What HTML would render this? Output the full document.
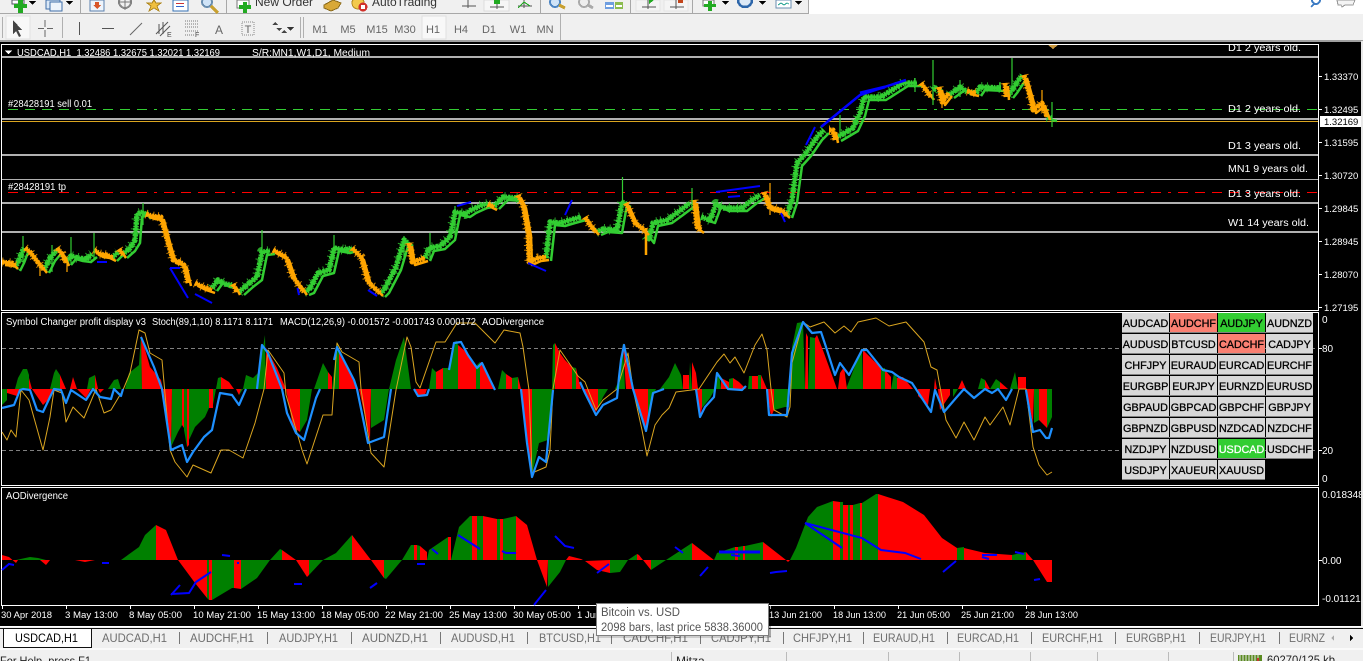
<!DOCTYPE html>
<html><head><meta charset="utf-8"><style>
html,body{margin:0;padding:0;background:#000;width:1363px;height:661px;overflow:hidden}
svg{display:block}
text{font-family:"Liberation Sans",sans-serif;font-size:10px;fill:#fff;white-space:pre}
.tb{font-size:11px;fill:#666;text-anchor:middle}
.tab{font-size:12px;fill:#6e6e6e}
.b{font-size:10.8px;fill:#000;text-anchor:middle;stroke:#000;stroke-width:.3}
.st{font-size:12px;fill:#222}
.p{font-size:9.5px}
.t{font-size:9.6px}
</style></head><body>
<svg width="1363" height="661" viewBox="0 0 1363 661" xmlns="http://www.w3.org/2000/svg" shape-rendering="crispEdges">
<defs>
<clipPath id="cm"><rect x="2" y="45" width="1316" height="265"/></clipPath>
<g id="gs" fill="none" stroke-linejoin="round">
<polyline points="15,268 19,260 22,252 24,248"/>
<polyline points="44,270 50,258 55,252 58,250"/>
<polyline points="66,262 71,256 78,258 86,259 92,254"/>
<polyline points="112,258 118,252"/>
<polyline points="122,255 130,248 135,240 137,214 143,212 146,216"/>
<polyline points="212,288 218,280 225,284 232,285"/>
<polyline points="239,292 248,284 257,277 262,252 270,251"/>
<polyline points="304,292 309,290 318,273 329,270 334,248 345,250 352,248"/>
<polyline points="380,294 384,290 396,267 404,240 408,243"/>
<polyline points="425,258 429,248 440,246 450,237 455,212 465,214 471,210 482,205 488,204"/>
<polyline points="494,206 503,197 518,198"/>
<polyline points="546,258 550,222 560,223 570,220 581,217"/>
<polyline points="596,232 603,229 617,230 622,202 626,204"/>
<polyline points="646,236 649,240 653,223 667,220 678,212 690,203"/>
<polyline points="701,217 710,220 716,204 724,208 742,208 752,200 760,195"/>
<polyline points="787,215 792,200 794,185 797,163 806,153 817,137 824,130"/>
<polyline points="836,138 853,128 860,113 864,97 881,97 903,83 917,83"/>
<polyline points="933,90 937,86"/>
<polyline points="949,95 960,87 967,92"/>
<polyline points="976,93 980,87 1001,88"/>
<polyline points="1008,95 1012,90 1022,75"/>
<polyline points="1047,117 1052,118"/>
</g>
<g id="os" fill="none" stroke-linejoin="round">
<polyline points="2,262 12,263 15,266"/>
<polyline points="25,248 30,252 36,260 44,270"/>
<polyline points="57,248 62,254 66,263"/>
<polyline points="94,250 100,254 107,255 113,258"/>
<polyline points="119,249 123,255"/>
<polyline points="146,214 152,216 161,217 165,232 168,243 173,260 180,262 184,265 188,283"/>
<polyline points="195,283 203,287 212,290"/>
<polyline points="233,284 237,292"/>
<polyline points="273,250 286,257 293,277 304,292"/>
<polyline points="352,248 361,257 368,282 380,293"/>
<polyline points="409,243 412,262 425,258"/>
<polyline points="488,204 494,207"/>
<polyline points="518,195 523,205 528,233 529,262 538,258 546,257"/>
<polyline points="585,217 590,225 596,232"/>
<polyline points="626,203 635,223 642,228 646,232"/>
<polyline points="694,200 697,227 701,230"/>
<polyline points="764,192 769,207 781,210 787,215"/>
<polyline points="829,130 833,130 835,140"/>
<polyline points="921,83 931,97"/>
<polyline points="939,87 942,102 949,93"/>
<polyline points="967,91 976,93"/>
<polyline points="1005,83 1006,97"/>
<polyline points="1024,75 1031,100 1033,110 1042,103 1047,117"/>
</g>
</defs>

<rect width="1363" height="661" fill="#000"/>
<!-- toolbars -->
<rect x="0" y="0" width="1363" height="41" fill="#f0f0f0"/>
<rect x="808" y="0" width="555" height="14" fill="#fff"/>
<rect x="0" y="13" width="808" height="1" fill="#a8a8a8"/>
<rect x="808" y="0" width="1" height="14" fill="#a8a8a8"/>
<rect x="0" y="40" width="1363" height="2" fill="#a0a0a0"/>

<!-- row 1 icons -->
<g>
<rect x="12" y="0" width="12" height="4" fill="#fff" stroke="#556"/><path d="M18 0h5v4h4v4h-4v5h-5v-5h-4v-4h4z" fill="#22aa22"/>
<path d="M29 1h7l-3.500 4z" fill="#000"/>
<rect x="46" y="0" width="14" height="9" fill="#dbe8f6" stroke="#3f6ea8"/><rect x="50" y="2" width="12" height="9" fill="#eef4fb" stroke="#3f6ea8"/>
<path d="M66 1h7l-3.500 4z" fill="#000"/>
<rect x="80" y="0" width="1" height="13" fill="#a8a8a8"/>
<rect x="90" y="0" width="14" height="11" fill="#eef4fb" stroke="#5a7fae"/><path d="M95 2h4v3h2l-4 4-4-4h2z" fill="#d8562a"/>
<circle cx="125" cy="2" r="6" fill="none" stroke="#888" stroke-width="2"/><path d="M125 0v10M118 2h14" stroke="#777"/>
<path d="M154 0l2 3h5l-4 3 2 5-5-3-5 3 2-5-4-3h5z" fill="#f0c040" stroke="#b08820"/>
<rect x="173" y="0" width="15" height="11" fill="#fff" stroke="#3672b5"/><rect x="176" y="3" width="8" height="1" fill="#c33"/><rect x="176" y="6" width="8" height="1" fill="#36c"/>
<circle cx="207" cy="2" r="5" fill="#cfe3f7" stroke="#6a8eb0" stroke-width="2"/><path d="M211 6l7 7" stroke="#c8a030" stroke-width="3"/>
<rect x="226" y="0" width="1" height="13" fill="#a8a8a8"/>
<rect x="237" y="0" width="12" height="8" fill="#fff" stroke="#777"/><path d="M243 2h4v3h4v4h-4v4h-4v-4h-4v-4h4z" fill="#22aa22"/>
<text x="255" y="6" style="font-size:12px;fill:#333">New Order</text>
<path d="M324 5l9-5 8 3-3 5-7 3-7-3z" fill="#d8a838" stroke="#8a6a1c"/>
<circle cx="358" cy="3" r="6" fill="#f2c94c" stroke="#b58a20"/><circle cx="363" cy="7" r="4.500" fill="#d0302a"/><rect x="361" y="5" width="4" height="4" fill="#fff"/>
<text x="372" y="6" style="font-size:12px;fill:#333">AutoTrading</text>
<g fill="none" stroke="#555"><path d="M462 6h14M468 0v8"/><path d="M518 6h14M524 0v8"/></g>
<rect x="484" y="0" width="25" height="11" fill="#f6f6f6" stroke="#ddd"/><path d="M490 7h14M497 0v9" stroke="#555"/><rect x="494" y="0" width="6" height="4" fill="#22aa22"/>
<path d="M518 8l6-6 6 4" fill="none" stroke="#22aa22"/>
<rect x="540" y="0" width="1" height="13" fill="#a8a8a8"/>
<circle cx="555" cy="2" r="5" fill="#cfe3f7" stroke="#4d86c4" stroke-width="2"/><path d="M559 5l6 3" stroke="#c8a030" stroke-width="3"/>
<circle cx="584" cy="2" r="5" fill="#eee" stroke="#aaa" stroke-width="2"/><path d="M588 5l5 3" stroke="#aaa" stroke-width="3"/>
<rect x="605" y="2" width="9" height="7" fill="#6f9ee0"/><rect x="615" y="2" width="8" height="7" fill="#8cbc50"/><rect x="606" y="5" width="7" height="2" fill="#fff"/><rect x="616" y="5" width="6" height="2" fill="#fff"/>
<rect x="630" y="0" width="1" height="13" fill="#a8a8a8"/>
<rect x="636" y="0" width="24" height="11" fill="#f4f4f4" stroke="#e4e4e4"/><path d="M642 7h14M648 0v9" stroke="#555"/><path d="M649 0l5 0-5 4z" fill="#22aa22"/>
<rect x="664" y="0" width="24" height="11" fill="#f4f4f4" stroke="#e4e4e4"/><path d="M670 7h14M676 0v9" stroke="#555"/><rect x="678" y="0" width="5" height="3" fill="#c3441a"/>
<rect x="692" y="0" width="1" height="13" fill="#a8a8a8"/>
<rect x="703" y="0" width="11" height="6" fill="#fff" stroke="#777"/><path d="M708 1h4v3h4v3h-4v4h-4v-4h-4v-3h4z" fill="#22aa22"/>
<path d="M722 1h7l-3.500 4z" fill="#000"/>
<circle cx="745" cy="0" r="7" fill="#dde9f6" stroke="#2d66aa" stroke-width="2.500"/>
<path d="M759 1h7l-3.500 4z" fill="#000"/>
<rect x="776" y="0" width="15" height="8" fill="#fff" stroke="#6a8eb0"/><path d="M778 5l3-2 3 2 3-2 2 1" fill="none" stroke="#3a9"/>
<path d="M795 1h7l-3.500 4z" fill="#000"/>
<circle cx="1316" cy="0" r="4" fill="none" stroke="#3d7cc4" stroke-width="2"/><path d="M1314 4l-3 3" stroke="#3d7cc4" stroke-width="2"/>
<path d="M1337 0h18l-2 5h-8l-3 2-1-2h-3z" fill="#f4f4f4" stroke="#999"/>
</g>
<!-- row 2 icons -->
<g>
<rect x="2" y="17" width="1" height="21" fill="#b0b0b0"/>
<rect x="6" y="16" width="24" height="23" fill="#f8f8f8" stroke="#e2e2e2"/>
<path d="M13 20v14l3-3 3 6 2-1-3-6h4z" fill="#444"/>
<path d="M45 20v7M45 30v7M38 28.500h6M47 28.500h6" stroke="#666" fill="none"/>
<rect x="62" y="17" width="1" height="21" fill="#b0b0b0"/>
<rect x="79" y="22" width="1" height="13" fill="#555"/>
<rect x="102" y="28" width="12" height="1" fill="#555"/>
<path d="M130 35l12-12" stroke="#666" shape-rendering="auto"/>
<path d="M156 34l12-12M160 36l10-10M159 24v10M163 22v12" stroke="#555" fill="none" shape-rendering="auto"/><text x="167" y="37" style="font-size:7px;fill:#444">E</text>
<path d="M185 21h13M185 24h13M185 27h13M185 31h13M185 35h10" stroke="#777" stroke-dasharray="1 1"/><text x="195" y="37" style="font-size:7px;fill:#444">F</text>
<text x="219" y="34" style="font-size:12px;fill:#666;text-anchor:middle">A</text>
<rect x="242" y="22" width="12" height="13" fill="none" stroke="#888" stroke-dasharray="1 1"/><text x="248" y="33" style="font-size:11px;fill:#666;text-anchor:middle">T</text>
<path d="M272 25l3-3 3 3zM276 28l3 3 3-3zM281 33l3-3 3 3z" fill="#444"/>
<path d="M287 27h7l-3.500 4z" fill="#333"/>
<rect x="300" y="17" width="1" height="21" fill="#b0b0b0"/><rect x="303" y="17" width="1" height="21" fill="#b0b0b0"/>
<rect x="422" y="16" width="24" height="23" fill="#f8f8f8" stroke="#e0e0e0"/>
<text class="tb" x="320" y="33">M1</text><text class="tb" x="348" y="33">M5</text><text class="tb" x="377" y="33">M15</text><text class="tb" x="405" y="33">M30</text><text class="tb" x="433" y="33">H1</text><text class="tb" x="461" y="33">H4</text><text class="tb" x="489" y="33">D1</text><text class="tb" x="518" y="33">W1</text><text class="tb" x="545" y="33">MN</text>
<rect x="560" y="14" width="1" height="26" fill="#b0b0b0"/>
</g>

<!-- frames -->
<g fill="none" stroke="#fff">
<path d="M1.500 44.500H1318.500V310.500H1.500Z"/>
<path d="M1.500 312.500H1318.500V485.500H1.500Z"/>
<path d="M1.500 487.500H1318.500V605.500H1.500Z"/>
</g>
<g fill="#fff"><rect x="1319" y="76" width="3" height="1"/><rect x="1319" y="109" width="3" height="1"/><rect x="1319" y="142" width="3" height="1"/><rect x="1319" y="175" width="3" height="1"/><rect x="1319" y="208" width="3" height="1"/><rect x="1319" y="241" width="3" height="1"/><rect x="1319" y="274" width="3" height="1"/><rect x="1319" y="307" width="3" height="1"/><rect x="1319" y="348" width="3" height="1"/><rect x="1319" y="450" width="3" height="1"/><rect x="1319" y="560" width="3" height="1"/></g>

<!-- Main chart -->
<g clip-path="url(#cm)">
<g fill="#b0b0b0">
<rect x="2" y="56" width="1317" height="2"/><rect x="2" y="118" width="1317" height="2"/><rect x="2" y="154" width="1317" height="2"/><rect x="2" y="179" width="1317" height="1"/><rect x="2" y="202" width="1317" height="2"/><rect x="2" y="231" width="1317" height="2"/>
</g>
<rect x="2" y="121" width="1316" height="1" fill="#daa520"/>
<path d="M8 109.500H1318" stroke="#32cd32" stroke-dasharray="10 7 10 7 10 7 10 7 3 7"/>
<path d="M8 192.500H1318" stroke="#ff0000" stroke-dasharray="10 7 10 7 10 7 10 7 3 7"/>
<g style="shape-rendering:auto">
<use href="#gs" stroke="#32cd32" stroke-width="10" stroke-dasharray="1 7.300 1 4.700 1 11.100 1 3.300 1 9" opacity=".8"/>
<use href="#gs" stroke="#32cd32" stroke-width="5.500" stroke-dasharray="2.500 .8 1.500 1.100"/>
<use href="#gs" stroke="#32cd32" stroke-width="3"/>
<use href="#gs" stroke="#32cd32" stroke-width="2.500" transform="translate(5,3)"/>
<use href="#os" stroke="#ffa500" stroke-width="9" stroke-dasharray="1 6.300 1 3.700 1 9.100" opacity=".8"/>
<use href="#os" stroke="#ffa500" stroke-width="5" stroke-dasharray="2.500 .8 1.500 1.100"/>
<use href="#os" stroke="#ffa500" stroke-width="3"/>
<use href="#os" stroke="#ffa500" stroke-width="2.500" transform="translate(3,3)"/>
<path fill="none" stroke="#32cd32" stroke-width="1.200" d="M23 236V262M52 245V272M71 237V265M94 233V260M143 203V225M262 230V255M334 235V260M404 236V262M430 233V258M455 206V235M622.500 177V206M692 188V210M840 115V135M933 60V105M1012 58V95M1052 102V127M960 80V97M915 78V92M1000 82V92"/>
<path fill="none" stroke="#ffa500" stroke-width="1.200" d="M40 265V276M67 258V272M770 183V215M1033 95V112M1042 90V112M942 98V108"/>
<path fill="none" stroke="#ffa500" stroke-width="2.500" d="M646 228V255"/>
<g fill="none" stroke="#0000ff" stroke-width="2">
<path d="M97 262H107M170 268H180M170 268L188 298M195 294L212 303M297.500 288L299 295M368 290L377 296M457 206L471 202M528 263L546 271"/>
<path d="M565 215L572 200M716 192L760 186M728 197L740 196M781 213L785 222M806 145L815 127"/>
<path d="M821 127L860 95L906 80" stroke-width="2.500"/>
<path d="M860 93L885 87" stroke-width="3"/>
</g>
</g>
<text x="8" y="107" textLength="84" lengthAdjust="spacingAndGlyphs">#28428191 sell 0.01</text>
<text x="8" y="190" textLength="58" lengthAdjust="spacingAndGlyphs">#28428191 tp</text>
<text x="1228" y="51" textLength="73" lengthAdjust="spacingAndGlyphs">D1 2 years old.</text>
<text x="1228" y="112" textLength="73" lengthAdjust="spacingAndGlyphs">D1 2 years old.</text>
<text x="1228" y="149" textLength="73" lengthAdjust="spacingAndGlyphs">D1 3 years old.</text>
<text x="1228" y="172" textLength="80" lengthAdjust="spacingAndGlyphs">MN1 9 years old.</text>
<text x="1228" y="197" textLength="73" lengthAdjust="spacingAndGlyphs">D1 3 years old.</text>
<text x="1228" y="226" textLength="81" lengthAdjust="spacingAndGlyphs">W1 14 years old.</text>
</g>
<path d="M1048 45h10l-5 4z" fill="#c8963c"/>
<path d="M5 50.500h7l-3.500 4z" fill="#fff"/>
<text x="17" y="56" textLength="203" lengthAdjust="spacingAndGlyphs">USDCAD,H1  1.32486 1.32675 1.32021 1.32169</text>
<text x="252" y="56" textLength="118" lengthAdjust="spacingAndGlyphs">S/R:MN1,W1,D1, Medium</text>

<!-- price scale -->
<g>
<text class="p" x="1324" y="80">1.33370</text><text class="p" x="1324" y="113">1.32495</text>
<rect x="1320" y="116" width="41" height="11" fill="#fff"/><text class="p" x="1324" y="125" style="fill:#000">1.32169</text>
<text class="p" x="1324" y="146">1.31595</text><text class="p" x="1324" y="179">1.30720</text><text class="p" x="1324" y="212">1.29845</text><text class="p" x="1324" y="245">1.28945</text><text class="p" x="1324" y="278">1.28070</text><text class="p" x="1324" y="311">1.27195</text>
<text x="1322" y="323">0</text><text x="1322" y="352">80</text><text x="1322" y="454">20</text><text x="1322" y="482">0</text>
<text x="1322" y="498">0.018348</text><text x="1322" y="564">0.00</text><text x="1322" y="602">-0.011215</text>
</g>

<!-- indicator window 1 -->
<path d="M2 348.500H1318M2 450.500H1318" stroke="#808080" stroke-dasharray="4 3"/>
<g style="shape-rendering:auto">
<g fill="#008000">
<path d="M2 389V405L7 400V389ZM15 389L18 378 23 369 27 369 29 375V389ZM50 389L54 373 56 369 60 375V389ZM87 389L89 378 95 375V389ZM108 389L114 380 118 379 121 389ZM125 389L129 373 139 365 141 335 142 389Z"/>
<path d="M172 389L171 447 178 432 182 425V389ZM184 389V430L187 447V389ZM189 389V440L195 427 205 417 209 408V389ZM213 389V405L216 389ZM216 389L218 378 221 377 221 389ZM239 395L243 389 239 389ZM243 389L246 375 253 378 259 372 265 335 266 389Z"/>
<path d="M300 389V432L307 420 312 389ZM314 389L323 363 328 372V389ZM332 389L337 342 339 350V389ZM371 389V428L384 420 389 389ZM389 389L396 360 404 337 411 389ZM429 389L432 368 436 372V389ZM443 389L443 368 450 368 456 340 458 345V389ZM476 389V366L480 362V389ZM498 389L502 370 506 374V389ZM512 389V378L518 377V389ZM532 389V475L539 443 548 440 552 389ZM552 389L553 345 555 343V389Z"/>
<path d="M572 389L572 367 576 368 576 389ZM598 389V408L603 397 608 389ZM615 389L619 380 623 343 625 389ZM648 389V425L653 397 656 389ZM660 389L669 377 675 363 681 375 683 389ZM689 389L690 362 692 389ZM702 389V408L710 398 715 389ZM715 389L719 373 721 389ZM729 389V379L733 378V389ZM748 389L749 376 752 376V389ZM758 389V375H761V389ZM774 389V410L785 407 789 407 790 389ZM790 389L792 347 797 323 803 322 805 389ZM808 389L810 337 815 338 815 389ZM846 389L862 348 863 389ZM881 389V368H885V389ZM891 389L894 373 897 378V389ZM953 389V397L958 389ZM978 389L981 378 985 380V389ZM990 389L996 379 1000 382V389ZM1010 389L1015 372 1018 389ZM1034 389V423L1039 420V389ZM1047 389V428L1052 417V389Z"/>
</g>
<g fill="#ff0000">
<path d="M7 389V393L17 396 20 389ZM29 389V378L32 389ZM32 389L43 405 48 400 54 389ZM60 389V375L66 389ZM70 389L73 377 77 389ZM77 389L86 398 91 389ZM95 389V375L98 389ZM98 389L100 393 104 389ZM142 389L141 335 150 367 161 380 163 389Z"/>
<path d="M163 389L171 447 172 389ZM182 389V425L184 428V389ZM187 389V447L189 445V389ZM209 389V408L213 408V389ZM221 389V377L229 382 234 389ZM236 389L239 395 241 389ZM266 389V348L277 368 286 389ZM286 389L293 427 300 432V389ZM328 389V372L332 377V389ZM339 389V350L357 389ZM359 389L370 440 371 389ZM414 389L416 395 425 395 427 389ZM436 389V372L443 368V389ZM458 389V345L464 350 476 366V389ZM480 389V362L495 389ZM506 389V374L512 378V389ZM518 389V377L521 389ZM521 389L532 475V389ZM555 389V343L560 353 565 360 572 367V389ZM576 389V368L581 389Z"/>
<path d="M583 389L596 412 598 408V389ZM626 389L623 343 633 389ZM633 389L646 432 648 425V389ZM683 389V375H689V389ZM692 389V362L696 373 698 389ZM695 389L700 417 702 408V389ZM721 389V378L729 382V389ZM733 389V378L739 382 746 389ZM752 389V376H758V389ZM761 389V375L767 389ZM767 389L771 417 774 410V389ZM805 389L806 333 808 337V389ZM815 389V338L817 335 824 353 837 389ZM838 389L840 373 844 367 847 389ZM863 389V350L881 368V389ZM885 389V370L891 377V389ZM897 389V378L903 377 913 389ZM918 389V396L928 405 930 389ZM934 389L935 378 937 389ZM938 389L940 410 950 395V389ZM958 389L962 380 966 389ZM985 389V380L990 389ZM1000 389V382L1008 389ZM1018 389V377H1026V389ZM1026 389L1033 423 1034 389ZM1039 389V420L1047 428V389Z"/>
</g>
<polyline fill="none" stroke="#daa520" stroke-width="1" stroke-linejoin="round" points="2,432 7,440 11,430 16,437 21,390 29,400 43,450 50,417 54,390 62,393 66,422 73,407 84,418 96,389 104,413 111,410 123,390 130,373 139,330 145,333 150,353 162,360 170,450 175,462 187,477 193,465 211,473 221,450 229,450 243,458 255,423 264,389 268,350 284,373 286,395 302,450 307,464 323,415 332,415 337,343 342,352 359,362 361,389 371,453 384,467 396,390 407,337 411,347 416,382 420,388 436,342 445,342 457,323 475,323 495,343 504,330 520,333 523,347 529,390 532,473 546,467 550,450 553,389 560,350 578,376 585,382 596,410 603,400 617,389 628,353 633,389 642,430 647,456 655,425 662,415 669,408 676,392 699,389 717,362 724,354 730,363 735,357 744,373 755,345 762,334 767,350 771,389 774,410 787,417 790,407 792,363 803,322 810,327 824,322 835,333 844,326 851,332 858,322 876,318 889,326 906,322 924,342 931,367 937,370 946,420 956,438 964,422 974,440 985,417 990,425 1003,407 1010,425 1019,389 1026,389 1033,447 1039,465 1047,475 1052,472"/>
<g fill="none" stroke="#1e90ff" stroke-width="2.200" stroke-linejoin="round">
<polyline points="2,408 14,405 20,390 23,389 30,390 37,410 43,412 50,397 54,389 61,390 66,403 71,390 86,400 93,389 100,397 111,399 114,389 121,396 123,389"/>
<polyline points="141,337 154,367 162,389 171,450 182,445 187,462 193,452 204,437 212,430 220,393 232,395 239,405 246,389"/>
<polyline points="257,389 262,345 268,353 282,389 287,413 296,433 304,440 316,398 320,389"/>
<polyline points="334,360 337,347 354,380 357,389 368,443 384,437 391,389"/>
<polyline points="414,389 418,396 427,395 429,389"/>
<polyline points="449,370 454,343 461,342 468,355 477,368 482,363 495,390"/>
<polyline points="521,389 527,443 532,477 539,457 546,462 553,390"/>
<polyline points="580,382 585,393 596,415 603,405 617,398 619,377 621,360 624,345 633,389 646,431 653,393 664,389"/>
<polyline points="696,389 700,417 705,407 714,397 717,373 728,389 742,390 746,386"/>
<polyline points="767,389 769,415 787,415 792,353 803,322 812,333 821,332 826,347 835,375 840,363 849,375 862,350 867,350 883,370 892,372 899,377 912,383 931,412 935,390 944,412 956,398 964,389 974,398 985,389 992,393 998,389 1006,400 1012,389"/>
<polyline points="1026,390 1033,432 1040,430 1046,438 1049,438 1052,428"/>
</g>
</g>
<text x="6" y="325" textLength="140" lengthAdjust="spacingAndGlyphs">Symbol Changer profit display v3</text>
<text x="152" y="325" textLength="121" lengthAdjust="spacingAndGlyphs">Stoch(89,1,10) 8.1171 8.1171</text>
<text x="280" y="325" textLength="196" lengthAdjust="spacingAndGlyphs">MACD(12,26,9) -0.001572 -0.001743 0.000172</text>
<text x="482" y="325" textLength="62" lengthAdjust="spacingAndGlyphs">AODivergence</text>

<!-- AO window -->
<g style="shape-rendering:auto">
<g fill="#ff0000">
<path d="M2 560V555L9 557 16 563 18 560ZM40 560L46 565 50 560ZM75 560L85 562 95 560ZM156 560V525L166 530 178 560ZM178 560L195 583 207 598V560ZM209 560V600L212 600V560ZM234 560V588L241 589V560ZM282 560V550L296 560ZM296 560L307 577 309 575V560ZM352 560V535L371 560ZM371 560L384 578V560ZM414 560V545H417V560ZM420 560V546L427 552V560ZM448 560V537H451V560ZM472 560V516H477V560ZM483 560V516L497 519V560ZM500 560V519H503V560ZM516 560V516L527 525 537 560ZM537 560L547 587 548 560Z"/>
<path d="M566 560L569 556 581 559 583 560ZM585 561L597 570 610 573V560ZM637 554L639 555 643 560H637ZM643 560L651 570V560ZM692 560V543L714 560ZM735 560V547H738V560ZM743 560V546H745V560ZM763 560V542L786 560ZM786 560L788 562 790 560ZM833 560V501L840 502V560ZM843 560V505H848V560ZM850 560V505H853V560ZM860 560V503H862V560ZM878 560V494L903 502 924 515 942 538 957 548V560ZM964 560V548L985 553 1012 555V560ZM1026 560V552L1033 560ZM1033 560L1047 582 1052 582V560Z"/>
</g>
<g fill="#008000">
<path d="M16 560L30 557 38 558 46 560ZM46 565L52 560ZM121 560L139 547 145 535 156 525V560ZM207 560V598L209 600V560ZM212 560V600L232 588 234 588V560ZM241 560V589L257 578 270 560ZM270 560L280 549 282 550V560ZM309 575V560L323 560ZM323 560L336 553 352 535V560ZM384 578L386 579 402 560H384ZM402 560L411 545 414 545V560ZM417 560V545L420 546V560ZM427 560L429 550 448 537V560ZM451 560L459 527 470 516 472 516V560ZM477 560V516H483V560ZM497 560V519H500V560ZM503 560V519L516 516V560ZM548 560V587L560 572 566 560Z"/>
<path d="M610 573L620 572 628 560H610ZM628 560L637 554V560ZM651 570L666 560H651ZM666 560L692 543V560ZM714 560L717 553 735 547V560ZM738 560V547L743 546V560ZM745 560V546L763 542V560ZM790 560L796 548 808 517 817 507 833 501V560ZM840 560V502H843V560ZM848 560V505H850V560ZM853 560V505L860 503V560ZM862 560V503L876 494 878 494V560ZM957 560V548L964 547V560ZM1012 560V555L1026 552V560Z"/>
</g>
<g fill="none" stroke="#0000ff" stroke-width="2">
<path d="M2 570L9 564 14 565M102 563H109M222 555L230 556M237 563H239M171 595L180 585M171 594L189 593 196 582 211 572M294 584H302M370 588L377 583M417 564H425M432 549L438 554M458 535L480 549M502 551L506 553H516M534 605L546 590M555 536L565 546 574 548M675 547L683 553M597 573L609 564M700 576L708 567M770 573L776 572 787 571M731 555L740 556M805 523L842 548M805 523L862 538 881 550 905 553 921 559M943 572L956 561M982 555H997M982 557L989 559M1015 552L1024 554M1034 580L1040 579"/>
<path d="M719 552H760" stroke-width="3"/>
</g>
</g>
<text x="6" y="499" textLength="62" lengthAdjust="spacingAndGlyphs">AODivergence</text>

<!-- symbol buttons -->
<g>
<g fill="#d8d8d8">
<rect x="1122" y="313" width="47" height="20"/><rect x="1266" y="313" width="47" height="20"/>
<rect x="1122" y="334" width="47" height="20"/><rect x="1170" y="334" width="47" height="20"/><rect x="1266" y="334" width="47" height="20"/>
<rect x="1122" y="355" width="47" height="20"/><rect x="1170" y="355" width="47" height="20"/><rect x="1218" y="355" width="47" height="20"/><rect x="1266" y="355" width="47" height="20"/>
<rect x="1122" y="376" width="47" height="20"/><rect x="1170" y="376" width="47" height="20"/><rect x="1218" y="376" width="47" height="20"/><rect x="1266" y="376" width="47" height="20"/>
<rect x="1122" y="397" width="47" height="20"/><rect x="1170" y="397" width="47" height="20"/><rect x="1218" y="397" width="47" height="20"/><rect x="1266" y="397" width="47" height="20"/>
<rect x="1122" y="418" width="47" height="20"/><rect x="1170" y="418" width="47" height="20"/><rect x="1218" y="418" width="47" height="20"/><rect x="1266" y="418" width="47" height="20"/>
<rect x="1122" y="439" width="47" height="20"/><rect x="1170" y="439" width="47" height="20"/><rect x="1266" y="439" width="47" height="20"/>
<rect x="1122" y="460" width="47" height="20"/><rect x="1170" y="460" width="47" height="20"/><rect x="1218" y="460" width="47" height="20"/>
</g>
<g fill="#fa8072"><rect x="1170" y="313" width="47" height="20"/><rect x="1218" y="334" width="47" height="20"/></g>
<g fill="#32cd32"><rect x="1218" y="313" width="47" height="20"/><rect x="1218" y="439" width="47" height="20"/></g>
<path d="M1122 332.500h191M1122 353.500h191M1122 374.500h191M1122 395.500h191M1122 416.500h191M1122 437.500h191M1122 458.500h191M1122 479.500h143" stroke="#808080"/>
<g>
<text class="b" x="1145.500" y="327">AUDCAD</text><text class="b" x="1193.500" y="327">AUDCHF</text><text class="b" x="1241.500" y="327">AUDJPY</text><text class="b" x="1289.500" y="327">AUDNZD</text>
<text class="b" x="1145.500" y="348">AUDUSD</text><text class="b" x="1193.500" y="348">BTCUSD</text><text class="b" x="1241.500" y="348">CADCHF</text><text class="b" x="1289.500" y="348">CADJPY</text>
<text class="b" x="1145.500" y="369">CHFJPY</text><text class="b" x="1193.500" y="369">EURAUD</text><text class="b" x="1241.500" y="369">EURCAD</text><text class="b" x="1289.500" y="369">EURCHF</text>
<text class="b" x="1145.500" y="390">EURGBP</text><text class="b" x="1193.500" y="390">EURJPY</text><text class="b" x="1241.500" y="390">EURNZD</text><text class="b" x="1289.500" y="390">EURUSD</text>
<text class="b" x="1145.500" y="411">GBPAUD</text><text class="b" x="1193.500" y="411">GBPCAD</text><text class="b" x="1241.500" y="411">GBPCHF</text><text class="b" x="1289.500" y="411">GBPJPY</text>
<text class="b" x="1145.500" y="432">GBPNZD</text><text class="b" x="1193.500" y="432">GBPUSD</text><text class="b" x="1241.500" y="432">NZDCAD</text><text class="b" x="1289.500" y="432">NZDCHF</text>
<text class="b" x="1145.500" y="453">NZDJPY</text><text class="b" x="1193.500" y="453">NZDUSD</text><text class="b" x="1241.500" y="453" style="fill:#fff;stroke:#fff">USDCAD</text><text class="b" x="1289.500" y="453">USDCHF</text>
<text class="b" x="1145.500" y="474">USDJPY</text><text class="b" x="1193.500" y="474">XAUEUR</text><text class="b" x="1241.500" y="474">XAUUSD</text>
</g>
</g>

<!-- time axis -->
<g fill="#fff"><rect x="2" y="606" width="1" height="3"/><rect x="66" y="606" width="1" height="3"/><rect x="130" y="606" width="1" height="3"/><rect x="194" y="606" width="1" height="3"/><rect x="258" y="606" width="1" height="3"/><rect x="322" y="606" width="1" height="3"/><rect x="386" y="606" width="1" height="3"/><rect x="450" y="606" width="1" height="3"/><rect x="514" y="606" width="1" height="3"/><rect x="578" y="606" width="1" height="3"/><rect x="770" y="606" width="1" height="3"/><rect x="834" y="606" width="1" height="3"/><rect x="898" y="606" width="1" height="3"/><rect x="962" y="606" width="1" height="3"/><rect x="1026" y="606" width="1" height="3"/></g>
<g>
<text class="t" x="1" y="618" textLength="51" lengthAdjust="spacingAndGlyphs">30 Apr 2018</text><text class="t" x="65" y="618" textLength="53" lengthAdjust="spacingAndGlyphs">3 May 13:00</text><text class="t" x="129" y="618" textLength="53" lengthAdjust="spacingAndGlyphs">8 May 05:00</text><text class="t" x="193" y="618" textLength="58" lengthAdjust="spacingAndGlyphs">10 May 21:00</text><text class="t" x="257" y="618" textLength="58" lengthAdjust="spacingAndGlyphs">15 May 13:00</text><text class="t" x="321" y="618" textLength="58" lengthAdjust="spacingAndGlyphs">18 May 05:00</text><text class="t" x="385" y="618" textLength="58" lengthAdjust="spacingAndGlyphs">22 May 21:00</text><text class="t" x="449" y="618" textLength="58" lengthAdjust="spacingAndGlyphs">25 May 13:00</text><text class="t" x="513" y="618" textLength="58" lengthAdjust="spacingAndGlyphs">30 May 05:00</text><text class="t" x="577" y="618">1 Jun</text>
<text class="t" x="769" y="618" textLength="53" lengthAdjust="spacingAndGlyphs">13 Jun 21:00</text><text class="t" x="833" y="618" textLength="53" lengthAdjust="spacingAndGlyphs">18 Jun 13:00</text><text class="t" x="897" y="618" textLength="53" lengthAdjust="spacingAndGlyphs">21 Jun 05:00</text><text class="t" x="961" y="618" textLength="53" lengthAdjust="spacingAndGlyphs">25 Jun 21:00</text><text class="t" x="1025" y="618" textLength="53" lengthAdjust="spacingAndGlyphs">28 Jun 13:00</text>
</g>

<rect x="1361" y="41" width="2" height="585" fill="#e8e8e8"/>

<!-- tab bar -->
<rect x="0" y="626" width="1363" height="35" fill="#f0f0f0"/>
<rect x="0" y="626" width="1363" height="1" fill="#fff"/>
<rect x="0" y="628" width="1363" height="1" fill="#111"/>
<rect x="3" y="628" width="88" height="19" fill="#fff"/>
<path d="M3.500 648V628.500H91.500V648" fill="none" stroke="#111"/>
<rect x="3" y="647" width="88" height="1" fill="#111"/>
<rect x="0" y="648" width="1363" height="2" fill="#fafafa"/>
<g fill="#777"><rect x="179" y="632" width="1" height="12"/><rect x="267" y="632" width="1" height="12"/><rect x="351" y="632" width="1" height="12"/><rect x="440" y="632" width="1" height="12"/><rect x="527" y="632" width="1" height="12"/><rect x="611" y="632" width="1" height="12"/><rect x="700" y="632" width="1" height="12"/><rect x="783" y="632" width="1" height="12"/><rect x="863" y="632" width="1" height="12"/><rect x="947" y="632" width="1" height="12"/><rect x="1031" y="632" width="1" height="12"/><rect x="1115" y="632" width="1" height="12"/><rect x="1199" y="632" width="1" height="12"/><rect x="1279" y="632" width="1" height="12"/></g>
<text x="15" y="642" style="font-size:12px;fill:#000" textLength="63" lengthAdjust="spacingAndGlyphs">USDCAD,H1</text>
<g>
<text class="tab" x="102" y="642" textLength="65" lengthAdjust="spacingAndGlyphs">AUDCAD,H1</text><text class="tab" x="190" y="642" textLength="64" lengthAdjust="spacingAndGlyphs">AUDCHF,H1</text><text class="tab" x="279" y="642" textLength="59" lengthAdjust="spacingAndGlyphs">AUDJPY,H1</text><text class="tab" x="362" y="642" textLength="66" lengthAdjust="spacingAndGlyphs">AUDNZD,H1</text><text class="tab" x="451" y="642" textLength="64" lengthAdjust="spacingAndGlyphs">AUDUSD,H1</text><text class="tab" x="539" y="642" textLength="62" lengthAdjust="spacingAndGlyphs">BTCUSD,H1</text><text class="tab" x="623" y="642" textLength="65" lengthAdjust="spacingAndGlyphs">CADCHF,H1</text><text class="tab" x="711" y="642" textLength="60" lengthAdjust="spacingAndGlyphs">CADJPY,H1</text><text class="tab" x="793" y="642" textLength="59" lengthAdjust="spacingAndGlyphs">CHFJPY,H1</text><text class="tab" x="873" y="642" textLength="62" lengthAdjust="spacingAndGlyphs">EURAUD,H1</text><text class="tab" x="957" y="642" textLength="62" lengthAdjust="spacingAndGlyphs">EURCAD,H1</text><text class="tab" x="1042" y="642" textLength="61" lengthAdjust="spacingAndGlyphs">EURCHF,H1</text><text class="tab" x="1126" y="642" textLength="60" lengthAdjust="spacingAndGlyphs">EURGBP,H1</text><text class="tab" x="1210" y="642" textLength="56" lengthAdjust="spacingAndGlyphs">EURJPY,H1</text><text class="tab" x="1289" y="642" textLength="36" lengthAdjust="spacingAndGlyphs">EURNZ</text>
</g>
<path d="M1334 635v6l-3-3z" fill="#aaa"/><path d="M1350 635v6l3-3z" fill="#000"/>

<!-- status bar -->
<text class="st" x="0" y="665" textLength="91" lengthAdjust="spacingAndGlyphs">For Help, press F1</text>
<text class="st" x="676" y="665">Mitza</text>
<g fill="#bbb"><rect x="671" y="652" width="1" height="9"/><rect x="786" y="652" width="1" height="9"/><rect x="888" y="652" width="1" height="9"/><rect x="959" y="652" width="1" height="9"/><rect x="1030" y="652" width="1" height="9"/><rect x="1097" y="652" width="1" height="9"/><rect x="1168" y="652" width="1" height="9"/><rect x="1233" y="652" width="1" height="9"/></g>
<g><rect x="1238" y="655" width="24" height="6" fill="#5a8a20"/><path d="M1240 655v6M1243 655v6M1246 655v6M1249 655v6M1252 655v6M1255 655v6M1258 655v6" stroke="#e8e8e8"/><rect x="1257" y="658" width="2" height="3" fill="#c33"/></g>
<text class="st" x="1267" y="664" textLength="68" lengthAdjust="spacingAndGlyphs">60270/125 kb</text>

<!-- tooltip -->
<rect x="596.500" y="603.500" width="172" height="32" fill="#fff" stroke="#808080"/>
<rect x="769" y="606" width="2" height="31" fill="#000" opacity=".3"/><rect x="599" y="636" width="172" height="2" fill="#000" opacity=".15"/>
<text x="601" y="616" style="font-size:11.500px;fill:#555" textLength="79" lengthAdjust="spacingAndGlyphs">Bitcoin vs. USD</text>
<text x="601" y="631" style="font-size:11.500px;fill:#555" textLength="162" lengthAdjust="spacingAndGlyphs">2098 bars, last price 5838.36000</text>
</svg>
</body></html>
